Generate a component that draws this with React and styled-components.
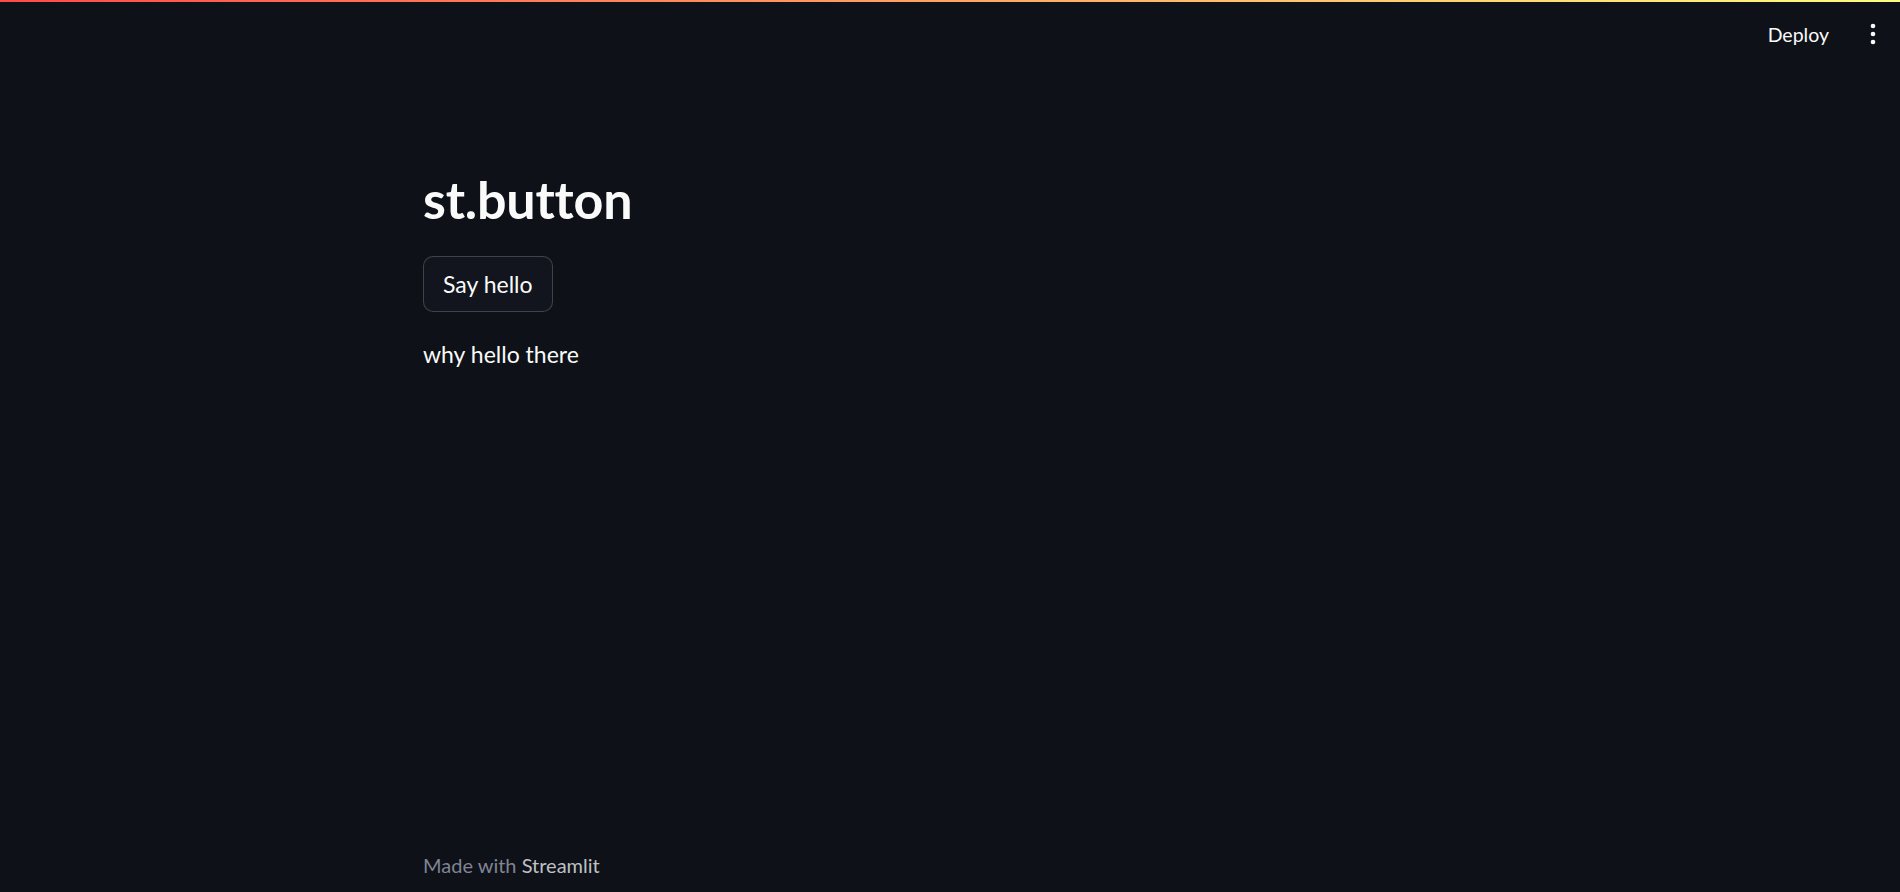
import React from 'react'
import styled, { createGlobalStyle } from 'styled-components'

const Global = createGlobalStyle`
  html, body {
    margin: 0;
    padding: 0;
    background: #0e1117;
    color: #fafafa;
    font-family: Lato, "Liberation Sans", sans-serif;
  }
`

function App() {
    return (
        <Page>
            <Global />
            <Decoration />
            <Header>
                <DeployButton>Deploy</DeployButton>
                <MenuButton aria-label="Main menu">
                    <svg width="8" height="22" viewBox="0 0 8 22">
                        <circle cx="4" cy="3" r="2.3" fill="#fafafa" />
                        <circle cx="4" cy="11" r="2.3" fill="#fafafa" />
                        <circle cx="4" cy="19" r="2.3" fill="#fafafa" />
                    </svg>
                </MenuButton>
            </Header>
            <Main>
                <Title>st.button</Title>
                <Button>Say hello</Button>
                <Text>why hello there</Text>
            </Main>
            <Footer>
                Made with <FooterLink>Streamlit</FooterLink>
            </Footer>
        </Page>
    )
}

const Page = styled.div`
    min-height: 100vh;
    display: flex;
    flex-direction: column;
`
const Decoration = styled.div`
    height: 2px;
    background: linear-gradient(90deg, #ff4b4b, #fffd80);
`
const Header = styled.header`
    height: 64px;
    display: flex;
    align-items: center;
    justify-content: flex-end;
    gap: 26px;
    padding-right: 17px;
`
const DeployButton = styled.button`
    background: transparent;
    border: none;
    color: #fafafa;
    font-family: inherit;
    font-size: 19.5px;
    padding: 6px 8px;
    cursor: pointer;
`
const MenuButton = styled.button`
    background: transparent;
    border: none;
    padding: 4px 6px;
    display: flex;
    cursor: pointer;
`
const Main = styled.main`
    width: 100%;
    max-width: 1054px;
    margin: 0 auto;
    padding-top: 102px;
    box-sizing: border-box;
`
const Title = styled.h1`
    margin: 0 0 26px;
    font-size: 52px;
    font-weight: 700;
    line-height: 1.2;
    letter-spacing: -0.2px;
`
const Button = styled.button`
    display: block;
    height: 56px;
    padding: 0 19px;
    border-radius: 10px;
    border: 1px solid rgba(250, 250, 250, 0.2);
    background: #12151d;
    color: #fafafa;
    font-family: inherit;
    font-size: 23px;
    cursor: pointer;
`
const Text = styled.p`
    margin: 24px 0 0;
    font-size: 23px;
    line-height: 1.6;
`
const Footer = styled.footer`
    margin-top: auto;
    width: 100%;
    max-width: 1054px;
    margin-left: auto;
    margin-right: auto;
    padding-bottom: 15px;
    font-size: 20px;
    color: #808495;
`
const FooterLink = styled.span`
    color: #bfc0c5;
`

export default App
